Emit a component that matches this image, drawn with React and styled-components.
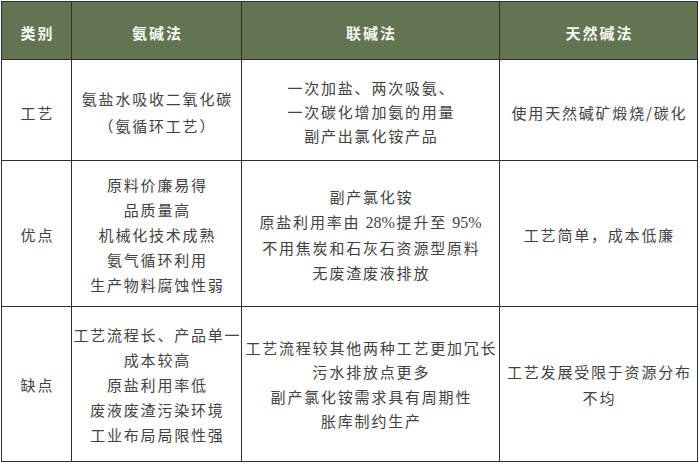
import React from "react";
import styled, { createGlobalStyle } from "styled-components";

const GlobalStyle = createGlobalStyle`
  body {
    margin: 0;
    background: #ffffff;
    font-family: "Noto Sans CJK SC", "DejaVu Sans", sans-serif;
  }
`;

const Wrapper = styled.div`
  padding: 1px 0 0 1px;
`;

const Table = styled.div`
  display: inline-grid;
  grid-template-columns: 69px 169px 257px 197px;
  grid-template-rows: 57px 100px 145px 154px;
  gap: 1px;
  padding: 1px;
  background: #2e2e2e;
`;

const HeadCell = styled.div`
  display: flex;
  align-items: center;
  justify-content: center;
  padding-top: 4px;
  padding-left: 2px;
  box-sizing: border-box;
  background: #637452;
  color: #f7f7f2;
  font-size: 15px;
  font-weight: 700;
  letter-spacing: 2px;
`;

const Cell = styled.div`
  display: flex;
  flex-direction: column;
  align-items: center;
  justify-content: center;
  box-sizing: border-box;
  padding-top: ${(p) => p.$shift || 0}px;
  background: #ffffff;
  color: #424242;
  font-size: 15px;
  letter-spacing: 1.8px;
  overflow: visible;
`;

const Line = styled.div`
  white-space: nowrap;
  line-height: ${(p) => p.$lh || 25}px;
  padding-left: 1.8px;
`;

const Num = styled.span`
  font-family: "Liberation Serif", serif;
  font-size: 16px;
  letter-spacing: 0;
  margin-right: 1.8px;
`;

const headers = ["类别", "氨碱法", "联碱法", "天然碱法"];

const rows = [
  {
    shift: 4,
    cells: [
      { lines: ["工艺"] },
      { lines: ["氨盐水吸收二氧化碳", "（氨循环工艺）"], lh: 27 },
      { lines: ["一次加盐、两次吸氨、", "一次碳化增加氨的用量", "副产出氯化铵产品"], lh: 24 },
      { lines: ["使用天然碱矿煅烧/碳化"] },
    ],
  },
  {
    shift: 1,
    cells: [
      { lines: ["优点"] },
      { lines: ["原料价廉易得", "品质量高", "机械化技术成熟", "氨气循环利用", "生产物料腐蚀性弱"] },
      {
        lines: [
          "副产氯化铵",
          <>
            原盐利用率由 <Num>28%</Num>提升至 <Num>95%</Num>
          </>,
          "不用焦炭和石灰石资源型原料",
          "无废渣废液排放",
        ],
      },
      { lines: ["工艺简单，成本低廉"] },
    ],
  },
  {
    shift: 1,
    cells: [
      { lines: ["缺点"] },
      { lines: ["工艺流程长、产品单一", "成本较高", "原盐利用率低", "废液废渣污染环境", "工业布局局限性强"] },
      { lines: ["工艺流程较其他两种工艺更加冗长", "污水排放点更多", "副产氯化铵需求具有周期性", "胀库制约生产"], lh: 24.5 },
      { lines: ["工艺发展受限于资源分布", "不均"], lh: 25.6 },
    ],
  },
];

export default function App() {
  return (
    <Wrapper>
      <GlobalStyle />
      <Table>
        {headers.map((h) => (
          <HeadCell key={h}>{h}</HeadCell>
        ))}
        {rows.map((row, ri) =>
          row.cells.map((cell, ci) => (
            <Cell key={`${ri}-${ci}`} $shift={row.shift}>
              {cell.lines.map((l, li) => (
                <Line key={li} $lh={cell.lh}>
                  {l}
                </Line>
              ))}
            </Cell>
          ))
        )}
      </Table>
    </Wrapper>
  );
}
